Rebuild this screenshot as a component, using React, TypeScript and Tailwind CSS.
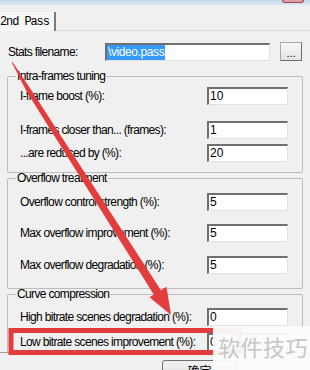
import React from 'react';

const font = { fontFamily: '"Liberation Sans", Arial, sans-serif' };

interface FieldProps {
  value: string;
}

const Field: React.FC<FieldProps> = ({ value }) => {
  return (
    <div className="h-[18px] w-[81px] bg-white border-t-2 border-l-2 border-b border-r border-t-[#6f6f6f] border-l-[#6f6f6f] border-b-[#e2e2e2] border-r-[#e2e2e2] pl-[1px] text-[12px] leading-[15px] text-black">
      {value}
    </div>
  );
};

interface RowProps {
  label: string;
  value: string;
  className: string;
}

const Row: React.FC<RowProps> = ({ label, value, className }) => {
  return (
    <div className={`grid grid-cols-[187px_81px] items-center h-[18px] pl-[12px] ${className}`}>
      <span className="text-[12px] leading-[18px] tracking-[-0.65px] text-black whitespace-nowrap">
        {label}
      </span>
      <Field value={value} />
    </div>
  );
};

interface GroupProps {
  title: string;
  className: string;
  children: React.ReactNode;
}

const Group: React.FC<GroupProps> = ({ title, className, children }) => {
  return (
    <fieldset className={`border border-[#bcbcbc] rounded-[2px] ${className}`}>
      <legend className="ml-[8px] px-[1px] h-[10px] text-[12px] leading-[10px] tracking-[-0.65px] text-black">
        {title}
      </legend>
      {children}
    </fieldset>
  );
};

const App: React.FC = () => {
  return (
    <div
      className="relative w-[310px] h-[370px] overflow-hidden bg-[#f0f0f0] text-black"
      style={font}
    >
      {/* window title edge */}
      <div className="flex h-[5px] bg-gradient-to-b from-[#c3d6ec] to-[#dbe7f4]">
        <div className="ml-auto mr-[6px] w-[22px] h-[3px] border border-t-0 border-[#b5424a] rounded-b-[3px] bg-[#d8a0a4]" />
      </div>

      {/* tab strip */}
      <div className="flex h-[26px]">
        <div className="mt-[7px] h-[19px] w-[56px] bg-[#f7f7f7] border-r-2 border-[#7b7b7b] flex items-center">
          <span
            className="text-[12px] leading-[14px] tracking-[-1.1px] text-black"
            style={{ fontFamily: '"Liberation Mono", "Courier New", monospace' }}
          >
            2nd Pass
          </span>
        </div>
        <div className="flex-1 self-end h-px bg-[#d6d6d6]" />
      </div>

      {/* stats filename */}
      <div className="mt-[11px] flex items-center h-[19px]">
        <div className="w-[105px] pl-[8px] text-[12px] tracking-[-0.65px] whitespace-nowrap">
          Stats filename:
        </div>
        <div className="h-[18px] w-[165px] bg-white border-t-2 border-l-2 border-b border-r border-t-[#6f6f6f] border-l-[#6f6f6f] border-b-[#e2e2e2] border-r-[#e2e2e2] flex items-center">
          <span className="h-[15px] bg-[#3399ff] text-white text-[12px] leading-[15px] tracking-[-0.4px] px-[1px]">
            \video.pass
          </span>
        </div>
        <div className="ml-[10px] h-[19px] w-[22px] border border-[#a9a9a9] border-b-[#6e6e6e] border-r-[#6e6e6e] bg-gradient-to-b from-[#f7f7f7] to-[#e4e4e4] flex items-end justify-center text-[11px] leading-[14px]">
          ...
        </div>
      </div>

      <div className="px-[7px]">
        <Group title="Intra-frames tuning" className="mt-[10px] pb-[10px]">
          <Row label="I-frame boost (%):" value="10" className="mt-[6px]" />
          <Row label="I-frames closer than... (frames):" value="1" className="mt-[16px]" />
          <Row label="...are reduced by (%):" value="20" className="mt-[5px]" />
        </Group>

        <Group title="Overflow treatment" className="pb-[14px]">
          <Row label="Overflow control strength (%):" value="5" className="mt-[10px]" />
          <Row label="Max overflow improvement (%):" value="5" className="mt-[13px]" />
          <Row label="Max overflow degradation (%):" value="5" className="mt-[14px]" />
        </Group>

        <Group title="Curve compression" className="pb-[1px] border-b-0 rounded-b-none">
          <Row label="High bitrate scenes degradation (%):" value="0" className="mt-[9px]" />
          <Row label="Low bitrate scenes improvement (%):" value="0" className="mt-[7px]" />
        </Group>
      </div>
      <div className="h-px bg-[#a0a0a0]" />

      {/* dialog buttons */}
      <div className="mt-[7px] flex">
        <div
          className="ml-[162px] h-[23px] w-[75px] border border-[#707070] rounded-[3px] bg-gradient-to-b from-[#f2f2f2] to-[#dddddd] flex justify-center pt-[2px] text-[12px] leading-[16px]"
          style={{ fontFamily: '"Noto Sans CJK SC", sans-serif' }}
        >
          确定
        </div>
      </div>

      {/* annotation: red arrow and highlight box */}
      <svg
        className="absolute left-0 top-0 pointer-events-none"
        width="310"
        height="370"
        viewBox="0 0 310 370"
      >
        <polygon
          points="11.7,62.2 12.3,61.8 31.4,90.3 162.4,292.6 154.4,295.6 27.0,92.3"
          fill="#e23c3c"
        />
        <polygon points="171,315 149.5,297.3 166.5,286.7" fill="#e23c3c" />
        <rect
          x="11"
          y="330.5"
          width="228"
          height="22"
          fill="none"
          stroke="#e23c3c"
          strokeWidth="5"
        />
      </svg>

      {/* watermark */}
      <div className="absolute left-[213px] top-[326px] w-[97px] h-[44px] bg-[#fbfbfb]/95 flex items-start pt-[6px] pl-[5px]">
        <span
          className="text-[22px] leading-[28px] tracking-[0.5px] text-[#c6c6c6]"
          style={{ fontFamily: '"Noto Sans CJK SC", sans-serif' }}
        >
          软件技巧
        </span>
      </div>
    </div>
  );
};

export default App;
